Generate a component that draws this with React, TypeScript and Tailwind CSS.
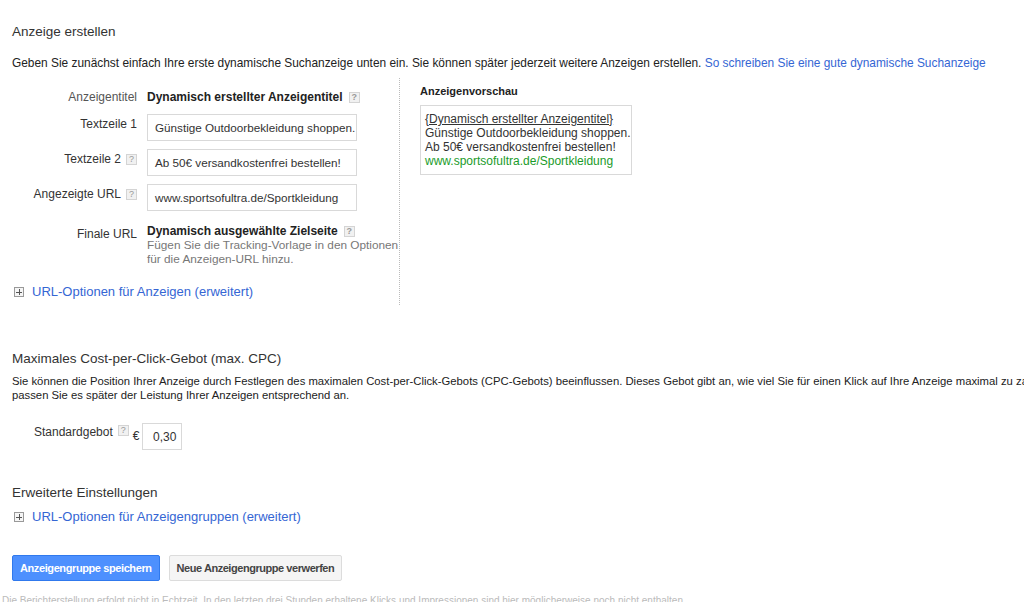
import React from "react";

const Help = () => (
  <span className="inline-flex h-[11px] w-[11px] items-center justify-center border border-[#d4d4d4] bg-[#f1f1f1] text-[9px] leading-none text-[#999]">
    ?
  </span>
);

const Plus = () => (
  <span className="relative inline-block h-[10px] w-[10px] border border-[#999] bg-[#f5f5f5]">
    <span className="absolute left-[1px] top-[3.5px] h-[1px] w-[6px] bg-[#555]" />
    <span className="absolute left-[3.5px] top-[1px] h-[6px] w-[1px] bg-[#555]" />
  </span>
);

const Field = ({ value }: { value: string }) => (
  <div className="flex h-[27px] w-[210px] items-center overflow-hidden whitespace-nowrap border border-[#d9d9d9] bg-white pl-[7px] text-[11.7px] text-[#333]">
    {value}
  </div>
);

export default function App() {
  return (
    <div className="h-[602px] overflow-hidden bg-white font-['Liberation_Sans',Arial,sans-serif] text-[#333]">
      <div className="px-[12px] pt-[23px]">
        {/* Anzeige erstellen */}
        <h2 className="text-[13.5px] leading-[18px] text-[#333]">Anzeige erstellen</h2>
        <p className="mt-[15px] whitespace-nowrap text-[11.9px] leading-[14px] text-[#222]">
          Geben Sie zunächst einfach Ihre erste dynamische Suchanzeige unten ein. Sie können später jederzeit weitere
          Anzeigen erstellen.{" "}
          <a className="text-[#3566d4]" href="#">
            So schreiben Sie eine gute dynamische Suchanzeige
          </a>
        </p>

        <div className="mt-[8px] flex">
          {/* form column */}
          <div className="w-[388px] border-r border-dotted border-[#bbb] pb-[5px] pt-[12px]">
            <div className="flex h-[14px] items-center">
              <div className="w-[125px] text-right text-[12px] text-[#555]">Anzeigentitel</div>
              <div className="ml-[10px] flex items-center gap-[6px] text-[12px] font-bold text-[#222]">
                Dynamisch erstellter Anzeigentitel <Help />
              </div>
            </div>

            <div className="mt-[10px] flex items-start">
              <div className="w-[125px] pt-[3px] text-right text-[12px] leading-[14px] text-[#333]">Textzeile 1</div>
              <div className="ml-[10px]">
                <Field value="Günstige Outdoorbekleidung shoppen." />
              </div>
            </div>

            <div className="mt-[8px] flex items-start">
              <div className="flex w-[125px] items-center justify-end gap-[5px] pt-[3px] text-[12px] leading-[14px] text-[#333]">
                Textzeile 2 <Help />
              </div>
              <div className="ml-[10px]">
                <Field value="Ab 50€ versandkostenfrei bestellen!" />
              </div>
            </div>

            <div className="mt-[8px] flex items-start">
              <div className="flex w-[125px] items-center justify-end gap-[5px] pt-[3px] text-[12px] leading-[14px] text-[#333]">
                Angezeigte URL <Help />
              </div>
              <div className="ml-[10px]">
                <Field value="www.sportsofultra.de/Sportkleidung" />
              </div>
            </div>

            <div className="mt-[13px] flex items-start">
              <div className="w-[125px] pt-[3px] text-right text-[12px] leading-[14px] text-[#333]">Finale URL</div>
              <div className="ml-[10px] whitespace-nowrap text-[12px] leading-[14px]">
                <div className="flex items-center gap-[6px] font-bold text-[#222]">
                  Dynamisch ausgewählte Zielseite <Help />
                </div>
                <div className="text-[11.8px] text-[#777]">
                  Fügen Sie die Tracking-Vorlage in den Optionen
                  <br />
                  für die Anzeigen-URL hinzu.
                </div>
              </div>
            </div>

            <div className="mt-[18px] flex h-[16px] items-center gap-[8px] pl-[2px]">
              <Plus />
              <a href="#" className="text-[13px] text-[#3566d4]">
                URL-Optionen für Anzeigen (erweitert)
              </a>
            </div>
          </div>

          {/* preview column */}
          <div className="pl-[20px] pt-[7px]">
            <div className="text-[11px] font-bold leading-[13px] text-[#222]">Anzeigenvorschau</div>
            <div className="mt-[7px] w-[212px] whitespace-nowrap border border-[#d9d9d9] px-[4px] py-[6px] text-[12px] leading-[14px] text-[#333]">
              <div className="underline">{"{Dynamisch erstellter Anzeigentitel}"}</div>
              <div>Günstige Outdoorbekleidung shoppen.</div>
              <div>Ab 50€ versandkostenfrei bestellen!</div>
              <div className="text-[#1a9b2a]">www.sportsofultra.de/Sportkleidung</div>
            </div>
          </div>
        </div>

        {/* CPC */}
        <h2 className="mt-[45px] text-[13.5px] leading-[18px] text-[#333]">Maximales Cost-per-Click-Gebot (max. CPC)</h2>
        <p className="mt-[6px] whitespace-nowrap text-[11.3px] leading-[14px] text-[#222]">
          Sie können die Position Ihrer Anzeige durch Festlegen des maximalen Cost-per-Click-Gebots (CPC-Gebots)
          beeinflussen. Dieses Gebot gibt an, wie viel Sie für einen Klick auf Ihre Anzeige maximal zu zahlen bereit sind.
          <br />
          passen Sie es später der Leistung Ihrer Anzeigen entsprechend an.
        </p>

        <div className="mt-[21px] flex items-start pl-[22px]">
          <span className="pt-[2px] text-[12px] leading-[14px] text-[#333]">Standardgebot</span>
          <span className="ml-[5px] flex pt-[2px]">
            <Help />
          </span>
          <span className="ml-[4px] pt-[6px] text-[12px] leading-[14px] text-[#333]">€</span>
          <div className="ml-[3px] flex h-[27px] w-[40px] items-center justify-end border border-[#d9d9d9] pr-[5px] text-[12px] text-[#333]">
            0,30
          </div>
        </div>

        {/* Erweiterte Einstellungen */}
        <h2 className="mt-[34px] text-[13.5px] leading-[18px] text-[#333]">Erweiterte Einstellungen</h2>
        <div className="mt-[7px] flex h-[16px] items-center gap-[8px] pl-[2px]">
          <Plus />
          <a href="#" className="text-[13px] text-[#3566d4]">
            URL-Optionen für Anzeigengruppen (erweitert)
          </a>
        </div>

        <div className="mt-[30px] flex gap-[9px]">
          <button className="h-[26px] rounded-[2px] border border-[#3079ed] bg-[#4d90fe] px-[7px] text-[11px] font-bold tracking-[-0.4px] text-white">
            Anzeigengruppe speichern
          </button>
          <button className="h-[26px] rounded-[2px] border border-[#dcdcdc] bg-[#f5f5f5] px-[7px] text-[11px] font-bold tracking-[-0.45px] text-[#444]">
            Neue Anzeigengruppe verwerfen
          </button>
        </div>
      </div>

      <p className="mt-[13px] whitespace-nowrap pl-[2px] text-[10px] leading-[13px] text-[#bbb]">
        Die Berichterstellung erfolgt nicht in Echtzeit. In den letzten drei Stunden erhaltene Klicks und Impressionen sind
        hier möglicherweise noch nicht enthalten.
      </p>
    </div>
  );
}
